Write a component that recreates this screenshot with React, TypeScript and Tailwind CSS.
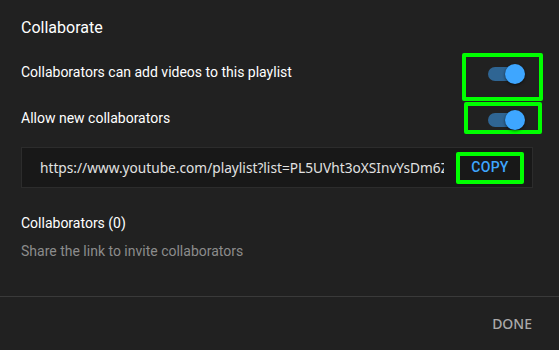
import React from "react";

function Toggle() {
  return (
    <div className="relative w-[37px] h-[20px]">
      <div className="absolute left-0 top-[3px] w-[34px] h-[14px] rounded-full bg-[#2f6593]" />
      <div className="absolute right-0 top-0 w-[20px] h-[20px] rounded-full bg-[#3ea6ff] shadow-[0_1px_3px_rgba(0,0,0,0.6)]" />
    </div>
  );
}

export default function App() {
  return (
    <div
      className="w-[559px] h-[350px] bg-[#212121] flex flex-col text-white overflow-hidden"
      style={{ fontFamily: "Roboto, 'Liberation Sans', sans-serif" }}
    >
      <div className="pt-[18px] pl-[21px] text-[16px] leading-[20px]">Collaborate</div>

      <div className="mt-[15px] h-[48px] flex items-center justify-between pl-[21px] pr-[16px]">
        <span className="text-[14px] leading-[20px] mb-[10px]">
          Collaborators can add videos to this playlist
        </span>
        <div className="w-[81px] h-[48px] border-4 border-[#00ff00] rounded-[2px] flex pl-[22px] pt-[7px]">
          <Toggle />
        </div>
      </div>

      <div className="mt-[1px] h-[32px] flex items-center justify-between pl-[21px] pr-[17px]">
        <span className="text-[14px] leading-[20px]">Allow new collaborators</span>
        <div className="w-[78px] h-[32px] border-4 border-[#00ff00] rounded-[2px] flex pl-[20px] pt-[4px]">
          <Toggle />
        </div>
      </div>

      <div className="mt-[13px] ml-[21px] w-[512px] h-[41px] border border-[#2c2c2c] bg-[#181818] flex items-center pl-[18px] pr-[8px] gap-[12px]">
        <div className="flex-1 min-w-0 overflow-hidden">
          <div
            className="whitespace-nowrap text-[13.7px] leading-[20px] text-[#e2e2e2]"
            style={{ fontFamily: "'Noto Sans', 'Open Sans', sans-serif" }}
          >
            https://www.youtube.com/playlist?list=PL5UVht3oXSInvYsDm6Z
          </div>
        </div>
        <div className="shrink-0 w-[68px] h-[32px] border-4 border-[#00ff00] rounded-[2px] flex items-center justify-center text-[14px] font-medium text-[#3ea6ff] tracking-[0.3px]">
          COPY
        </div>
      </div>

      <div className="mt-[25px] pl-[21px] text-[14px] leading-[20px]">Collaborators (0)</div>
      <div className="mt-[8px] pl-[21px] text-[14px] leading-[20px] text-[#8c8c8c]">
        Share the link to invite collaborators
      </div>

      <div className="mt-[35px] h-px bg-[#3a3a3a]" />

      <div className="flex justify-end pr-[27px] pt-[17px]">
        <span
          className="text-[14px] leading-[20px] font-medium text-[#aaaaaa]"
          style={{ fontFamily: "'Noto Sans', 'Open Sans', sans-serif" }}
        >
          DONE
        </span>
      </div>
    </div>
  );
}
